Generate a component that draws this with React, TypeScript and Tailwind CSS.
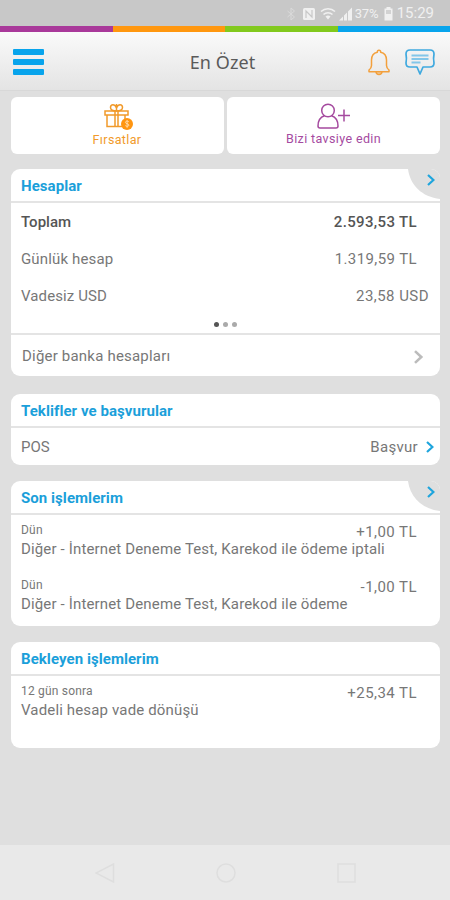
import type { ReactNode } from "react";

function Chevron({ className }: { className: string }) {
  return (
    <svg viewBox="0 0 8 12" fill="none" strokeWidth="2.2" className={className}>
      <path d="M1 1l5.400 5L1 11" stroke="currentColor" />
    </svg>
  );
}

function StatusBar() {
  return (
    <div className="flex h-[26px] items-center justify-end bg-[#c8c8c8] pt-px pr-4 text-[#f0f0f0]">
      <svg viewBox="0 0 10 14" fill="none" stroke="#dadada" className="mr-[7px] h-[14px] w-[10px]">
        <path d="M1.5 4l7 6L5 13V1l3.5 3-7 6" />
      </svg>
      <svg viewBox="0 0 12 12" className="mr-[5px] h-3 w-3">
        <rect width="12" height="12" rx="1.5" fill="currentColor" />
        <path d="M3 10V3l6 6V2" fill="none" stroke="#c8c8c8" strokeWidth="1.2" />
      </svg>
      <svg viewBox="0 0 16 14" fill="none" stroke="currentColor" strokeWidth="1.5" className="mr-[3px] h-[14px] w-4">
        <path d="M1 4.5a10 10 0 0 1 14 0M3.5 7.5a6.500 6.500 0 0 1 9 0" />
        <path d="M5.500 9.500a4 4 0 0 1 5 0L8 12.500z" fill="currentColor" stroke="none" />
      </svg>
      <svg viewBox="0 0 14 14" fill="currentColor" className="mr-[2px] h-[14px] w-[14px]">
        <path d="M0 13.500L4 9.500v4zM5 8.500l3-3v8H5zM9 4.500l4-4v13H9z" />
      </svg>
      <span className="w-[26px] text-[13px] leading-none tracking-[-0.100px] whitespace-nowrap">37%</span>
      <svg viewBox="0 0 9 14" className="mr-1 ml-[3px] h-[14px] w-[9px]">
        <path d="M2.500 0h4v1.500h2V13.500h-8V1.500h2z" fill="#f0f0f0" />
        <path d="M2 3h5v4H2z" fill="#d2d2d2" />
      </svg>
      <span className="text-[15px] leading-none">15:29</span>
    </div>
  );
}

function Header() {
  return (
    <header>
      <div className="grid h-[6px] grid-cols-4">
        <div className="bg-[#a9399a]" />
        <div className="bg-[#ff970f]" />
        <div className="bg-[#82c91e]" />
        <div className="bg-[#08a4ec]" />
      </div>
      <div className="grid h-[59px] grid-cols-[1fr_auto_1fr] items-center border-b border-[#d8d8d8] bg-linear-to-b from-[#fafafa] to-[#e4e4e4] pt-[2px] pr-[15px] pl-[13px]">
        <div className="flex flex-col gap-[4px]">
          <div className="h-[6px] w-[31px] rounded-[1px] bg-[#08a4ec]" />
          <div className="h-[6px] w-[31px] rounded-[1px] bg-[#08a4ec]" />
          <div className="h-[6px] w-[31px] rounded-[1px] bg-[#08a4ec]" />
        </div>
        <h1 className="pr-[3px] font-['Noto_Sans'] text-[18px] tracking-[0.1px] text-[#5a5a5a]">En Özet</h1>
        <div className="flex items-start justify-end gap-[15px]">
          <svg viewBox="0 0 22 27" fill="none" stroke="#f3a03c" strokeWidth="1.500" strokeLinejoin="round" className="h-[27px] w-[22px]">
            <path d="M11 1.200a1.600 1.600 0 0 1 1.600 2C16.600 4 18.500 7 18.500 11v5.500c0 2 .7 3 2.500 4.500v1.700H1V21c1.800-1.500 2.500-2.500 2.500-4.500V11c0-4 1.900-7 5.900-7.800a1.600 1.600 0 0 1 1.600-2z" />
            <path d="M8 22.700c.3 3.600 5.700 3.600 6 0" fill="#f3a03c" fillOpacity="0.350" />
          </svg>
          <svg viewBox="0 0 30 27" fill="none" stroke="#3fa9df" strokeWidth="1.700" strokeLinejoin="round" className="h-[27px] w-[30px]">
            <path d="M5 1h20q4 0 4 4c-.6 3-.6 6 0 9q0 4-4 4h-7l-3 7-3-7H5q-4 0-4-4c.6-3 .6-6 0-9q0-4 4-4z" />
            <path d="M6.500 6.500h17M6.500 10h17M6.500 13.500h9" stroke="#83c6e9" strokeWidth="2" />
          </svg>
        </div>
      </div>
    </header>
  );
}

function Shortcuts() {
  return (
    <div className="grid grid-cols-2 gap-[3px]">
      <div className="flex h-[57px] flex-col items-center rounded-[6px] bg-white pt-[6px] text-[#f19a2b]">
        <svg viewBox="0 0 30 28" fill="none" stroke="#f19a2b" strokeWidth="1.500" className="ml-[3px] h-[28px] w-[30px]">
          <path d="M1 8h23v4H1zM3 12v11.500h18V12M11 8v15.500M14 8v15.500" />
          <path d="M12.500 8C8 8 6.500 6.500 6.500 4.500 6.500 1 11 .500 12.500 5c1.500-4.500 6-4 6-.5 0 2-1.500 3.500-6 3.500zM12.500 1v7" />
          <circle cx="23" cy="21" r="6" fill="#ff9510" stroke="none" />
          <path d="M24.800 18.800c-1-1.300-3.500-.8-3.300.8.2 1.500 3.400.9 3.400 2.500 0 1.500-2.600 1.600-3.600.5M23.100 17.200v7.600" stroke="#ffe0b5" strokeWidth="0.900" />
        </svg>
        <span className="mt-px mr-[1px] text-[12.500px] leading-[15px] tracking-[0.350px]">Fırsatlar</span>
      </div>
      <div className="flex h-[57px] flex-col items-center rounded-[6px] bg-white pt-[6px] text-[#a54a9f]">
        <svg viewBox="0 0 34 26" fill="none" stroke="#a54a9f" strokeWidth="1.500" className="h-[26px] w-[34px]">
          <circle cx="11" cy="7.500" r="6.300" />
          <path d="M7.500 12.700C3.500 14 1 18 1 23q0 2 2 2h16q2 0 2-2c0-5-2.500-9-6.500-10.300M21 12.500h12M27 6.500v12" />
        </svg>
        <span className="mt-[2px] text-[12.500px] leading-[15px] tracking-[0.370px]">Bizi tavsiye edin</span>
      </div>
    </div>
  );
}

function Card({ title, more, children, className }: { title: string; more?: boolean; children: ReactNode; className: string }) {
  return (
    <section className={`relative overflow-hidden rounded-[9px] bg-white ${className}`}>
      <h2 className="h-[34px] border-b-2 border-[#e4e4e4] pl-[10px] text-[15px] leading-[35px] font-bold tracking-[0.060px] text-[#1b9fda]">
        {title}
      </h2>
      {more && (
        <div className="absolute top-0 right-0 h-[30px] w-[32px] text-[#1fa5dd]">
          <svg viewBox="0 0 32 30" className="h-[30px] w-[32px]">
            <path d="M0 0C2 16 14 28 32 30V0z" fill="#dfdfdf" />
          </svg>
          <Chevron className="absolute top-[5px] left-[19px] h-[12px] w-[8px]" />
        </div>
      )}
      {children}
    </section>
  );
}

function Transaction({ date, text, amount, className }: { date: string; text: string; amount: string; className?: string }) {
  return (
    <div className={className}>
      <div className="flex h-[18px] justify-between pr-[23px] pl-[10px]">
        <span className="text-[12px] leading-[14px] tracking-[0.200px]">{date}</span>
        <span className="text-[15px] leading-[18px] tracking-[0.450px]">{amount}</span>
      </div>
      <p className="pl-[10px] text-[15px] leading-[16px] tracking-[0.150px] whitespace-nowrap">{text}</p>
    </div>
  );
}

export default function App() {
  return (
    <div className="flex h-[900px] w-[450px] flex-col overflow-hidden bg-[#dfdfdf] font-[Roboto,sans-serif] text-[#777]">
      <StatusBar />
      <Header />
      <main className="flex flex-1 flex-col pt-[6px] pr-[10px] pl-[11px]">
        <Shortcuts />

        <Card title="Hesaplar" more className="mt-[15px] h-[207px]">
          <div className="flex flex-col pt-px text-[15px] leading-[37px]">
            <div className="flex h-[37px] justify-between pr-[23px] pl-[10px] font-medium text-[#555]">
              <span>Toplam</span>
              <span className="tracking-[0.350px]">2.593,53 TL</span>
            </div>
            <div className="flex h-[37px] justify-between pr-[23px] pl-[10px]">
              <span className="tracking-[0.150px]">Günlük hesap</span>
              <span className="tracking-[0.400px]">1.319,59 TL</span>
            </div>
            <div className="flex h-[37px] justify-between pr-[11px] pl-[10px]">
              <span className="tracking-[0.100px]">Vadesiz USD</span>
              <span className="tracking-[0.450px]">23,58 USD</span>
            </div>
          </div>
          <div className="flex h-[18px] justify-center gap-[4px] pt-[7px]">
            <div className="size-[5px] rounded-full bg-[#555]" />
            <div className="size-[5px] rounded-full bg-[#aaa]" />
            <div className="size-[5px] rounded-full bg-[#aaa]" />
          </div>
          <div className="flex h-[42px] items-center justify-between border-t-2 border-[#e4e4e4] pr-[16px] pl-[11px]">
            <span className="pt-[2px] text-[15px] tracking-[0.200px]">Diğer banka hesapları</span>
            <Chevron className="mt-[3px] h-[14px] w-[11px] text-[#bcbcbc]" />
          </div>
        </Card>

        <Card title="Teklifler ve başvurular" className="mt-[18px] h-[71px]">
          <div className="flex h-[37px] items-center pr-[6px] pl-[10px] text-[15px]">
            <span className="flex-1 pt-[2px]">POS</span>
            <span className="mr-[8px] pt-[2px] tracking-[0.300px]">Başvur</span>
            <Chevron className="h-[12px] w-[8px] text-[#1fa5dd]" />
          </div>
        </Card>

        <Card title="Son işlemlerim" more className="mt-4 h-[145px]">
          <Transaction
            date="Dün"
            text="Diğer - İnternet Deneme Test, Karekod ile ödeme iptali"
            amount="+1,00 TL"
            className="pt-[8px]"
          />
          <Transaction
            date="Dün"
            text="Diğer - İnternet Deneme Test, Karekod ile ödeme"
            amount="-1,00 TL"
            className="pt-[21px]"
          />
        </Card>

        <Card title="Bekleyen işlemlerim" className="mt-4 h-[106px]">
          <Transaction date="12 gün sonra" text="Vadeli hesap vade dönüşü" amount="+25,34 TL" className="pt-[8px]" />
        </Card>
      </main>

      <nav className="flex h-[55px] items-center justify-between bg-[#e9e9e9] pr-[93px] pl-[95px]">
        <svg viewBox="0 0 20 20" fill="none" stroke="#dedede" strokeWidth="1.500" className="size-5">
          <path d="M18.500 1v18L1 10z" />
        </svg>
        <svg viewBox="0 0 20 20" fill="none" stroke="#dedede" strokeWidth="1.500" className="size-5">
          <circle cx="10" cy="10" r="9" />
        </svg>
        <svg viewBox="0 0 20 20" fill="none" stroke="#dedede" strokeWidth="1.500" className="size-5">
          <rect x="1" y="1" width="17" height="18" />
        </svg>
      </nav>
    </div>
  );
}
